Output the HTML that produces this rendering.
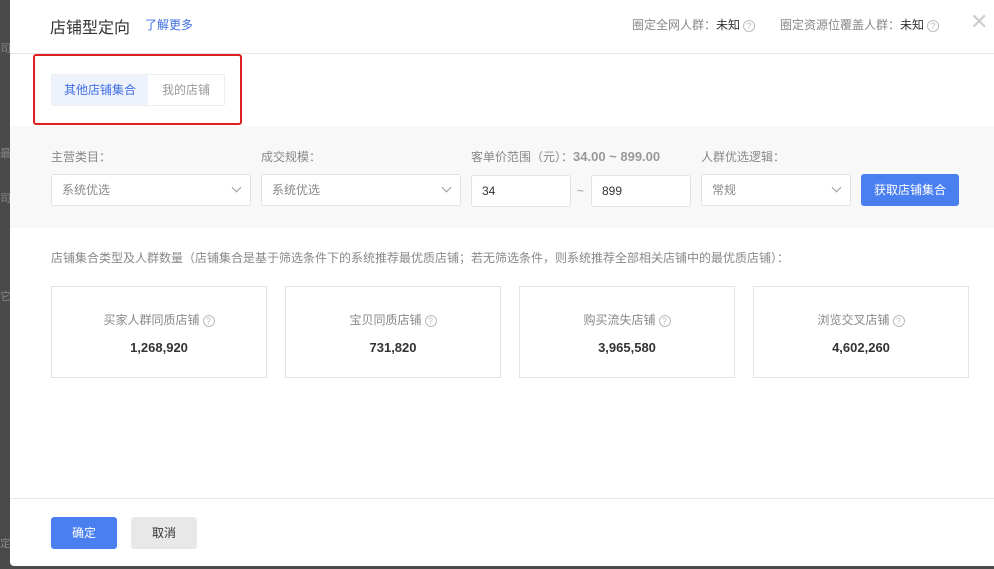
<!DOCTYPE html>
<html><head><meta charset="utf-8"><style>
*{box-sizing:border-box;margin:0;padding:0}
body{width:994px;height:569px;background:#4a4a4a;font-family:"Liberation Sans","Noto Sans CJK SC",sans-serif;position:relative;overflow:hidden;font-size:12px;color:#666}
.bgt{position:absolute;left:0;color:#888;font-size:11px}
.m{position:absolute;left:10px;top:0;width:984px;height:566px;background:#fff;border-radius:0 0 0 4px}
.a{position:absolute;white-space:nowrap}
.q{display:inline-block;width:12px;height:12px;border:1px solid #bbb;border-radius:50%;font-size:9px;line-height:10px;text-align:center;color:#bbb;vertical-align:0px;margin-left:3px}
.band{position:absolute;left:0;top:126px;width:984px;height:102px;background:#f8f8f8}
.sel{position:absolute;height:32px;background:#fff;border:1px solid #e2e2e2;border-radius:3px;padding-left:10px;line-height:30px;color:#888;font-size:12px}
.sel i{position:absolute;right:10px;top:9px;width:7px;height:7px;border-right:1px solid #999;border-bottom:1px solid #999;transform:rotate(45deg)}
.card{position:absolute;top:286px;width:216px;height:92px;border:1px solid #e2e2e2;text-align:center}
.card .t{margin-top:24px;color:#888;font-size:12px}
.card .n{margin-top:12px;color:#333;font-weight:bold;font-size:13px}
</style></head><body>
<div class="bgt" style="top:40px">司</div><div class="bgt" style="top:145px">最</div><div class="bgt" style="top:190px">司</div><div class="bgt" style="top:288px">它</div><div class="bgt" style="top:535px">定</div>
<div class="m">
<div class="a" style="left:40px;top:14px;font-size:16px;color:#333">店铺型定向</div>
<div class="a" style="left:135px;top:16px;font-size:12px;color:#3d6ee0">了解更多</div>
<div class="a" style="left:622px;top:16px;color:#888">圈定全网人群：<span style="color:#333">未知</span><span class="q">?</span></div>
<div class="a" style="left:770px;top:16px;color:#888">圈定资源位覆盖人群：<span style="color:#333">未知</span><span class="q">?</span></div>
<div class="a" style="left:960px;top:9px;font-size:22px;color:#ccc">✕</div>
<div class="a" style="left:0;top:53px;width:984px;height:1px;background:#e6e6e6"></div>
<div class="a" style="left:23px;top:54px;width:209px;height:71px;border:2px solid #e02020;border-radius:3px"></div>
<div class="a" style="left:41px;top:74px;width:174px;height:32px;border:1px solid #eee;border-radius:2px"></div>
<div class="a" style="left:42px;top:75px;width:96px;height:30px;background:#eef2fc;color:#3d6ee0;line-height:30px;text-align:center">其他店铺集合</div>
<div class="a" style="left:138px;top:75px;width:76px;height:30px;color:#999;line-height:30px;text-align:center">我的店铺</div>
<div class="band"></div>
<div class="a" style="left:41px;top:148px;color:#888">主营类目：</div>
<div class="a" style="left:251px;top:148px;color:#888">成交规模：</div>
<div class="a" style="left:461px;top:148px;color:#888">客单价范围（元）：<b style="color:#999;font-size:13px">34.00 ~ 899.00</b></div>
<div class="a" style="left:691px;top:148px;color:#888">人群优选逻辑：</div>
<div class="sel" style="left:41px;top:174px;width:200px">系统优选<i></i></div>
<div class="sel" style="left:251px;top:174px;width:200px">系统优选<i></i></div>
<div class="sel" style="left:461px;top:175px;width:100px;color:#333">34</div>
<div class="a" style="left:567px;top:184px;color:#999">~</div>
<div class="sel" style="left:581px;top:175px;width:100px;color:#333">899</div>
<div class="sel" style="left:691px;top:174px;width:150px">常规<i></i></div>
<div class="a" style="left:851px;top:174px;width:98px;height:32px;background:#4a7ff0;border-radius:3px;color:#fff;line-height:32px;text-align:center">获取店铺集合</div>
<div class="a" style="left:41px;top:249px;color:#888">店铺集合类型及人群数量（店铺集合是基于筛选条件下的系统推荐最优质店铺；若无筛选条件，则系统推荐全部相关店铺中的最优质店铺）：</div>
<div class="card" style="left:41px"><div class="t">买家人群同质店铺<span class="q">?</span></div><div class="n">1,268,920</div></div>
<div class="card" style="left:275px"><div class="t">宝贝同质店铺<span class="q">?</span></div><div class="n">731,820</div></div>
<div class="card" style="left:509px"><div class="t">购买流失店铺<span class="q">?</span></div><div class="n">3,965,580</div></div>
<div class="card" style="left:743px"><div class="t">浏览交叉店铺<span class="q">?</span></div><div class="n">4,602,260</div></div>
<div class="a" style="left:0;top:498px;width:984px;height:1px;background:#e6e6e6"></div>
<div class="a" style="left:41px;top:517px;width:66px;height:32px;background:#4a7ff0;border-radius:3px;color:#fff;line-height:32px;text-align:center">确定</div>
<div class="a" style="left:121px;top:517px;width:66px;height:32px;background:#e8e8e8;border-radius:3px;color:#333;line-height:32px;text-align:center">取消</div>
</div>
</body></html>
